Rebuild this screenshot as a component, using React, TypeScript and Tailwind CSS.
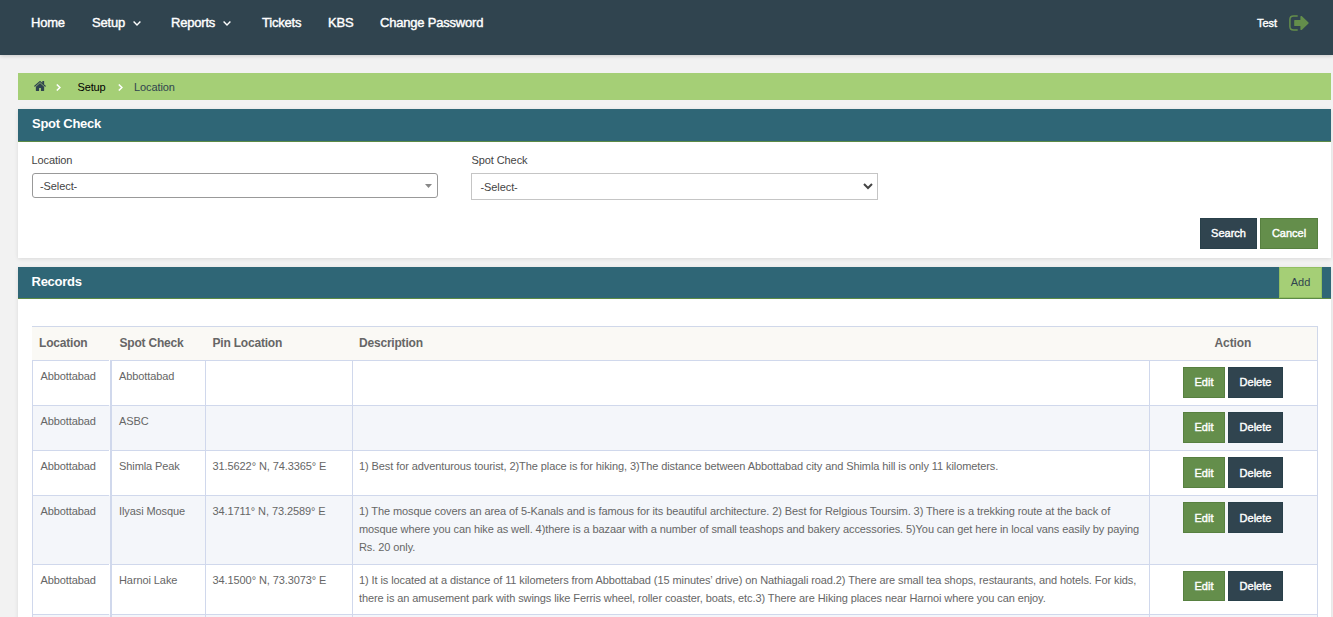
import React from "react";

const rows = [
  { h: "h-[45px]", spot: "Abbottabad", pin: "", desc: [] as string[], btn: "h-[31px] pb-[2px]" },
  { h: "h-[45px]", spot: "ASBC", pin: "", desc: [], btn: "h-[31px] pb-[2px]" },
  {
    h: "h-[45px]",
    spot: "Shimla Peak",
    pin: "31.5622° N, 74.3365° E",
    desc: ["1) Best for adventurous tourist, 2)The place is for hiking, 3)The distance between Abbottabad city and Shimla hill is only 11 kilometers."],
    btn: "h-[31px] pt-px",
  },
  {
    h: "h-[69px]",
    spot: "Ilyasi Mosque",
    pin: "34.1711° N, 73.2589° E",
    desc: [
      "1) The mosque covers an area of 5-Kanals and is famous for its beautiful architecture. 2) Best for Relgious Toursim. 3) There is a trekking route at the back of",
      "mosque where you can hike as well. 4)there is a bazaar with a number of small teashops and bakery accessories. 5)You can get here in local vans easily by paying",
      "Rs. 20 only.",
    ],
    btn: "h-[31px] pt-px",
  },
  {
    h: "h-[50px]",
    spot: "Harnoi Lake",
    pin: "34.1500° N, 73.3073° E",
    desc: [
      "1) It is located at a distance of 11 kilometers from Abbottabad (15 minutes’ drive) on Nathiagali road.2) There are small tea shops, restaurants, and hotels. For kids,",
      "there is an amusement park with swings like Ferris wheel, roller coaster, boats, etc.3) There are Hiking places near Harnoi where you can enjoy.",
    ],
    btn: "h-[30px]",
  },
];

const Chevron = ({ className }: { className: string }) => (
  <svg className={className} viewBox="0 0 8 5" fill="none" stroke="currentColor" strokeWidth="1.4">
    <path d="M0.6 0.6 4 4 7.4 0.6" />
  </svg>
);

const Separator = ({ className }: { className: string }) => (
  <svg className={`h-[7px] w-[5px] text-white ${className}`} viewBox="0 0 5 7" fill="none" stroke="currentColor" strokeWidth="1.5">
    <path d="M0.8 0.5 3.9 3.5 0.8 6.5" />
  </svg>
);

const green = "border border-[#578040] bg-[#648e4b] text-white";
const dark = "border border-[#29404a] bg-[#30444f] text-white";
const strong = "[-webkit-text-stroke:0.4px_currentColor]";

export default function App() {
  return (
    <div className="h-[617px] w-[1333px] overflow-hidden bg-[#f2f2f2] font-['Liberation_Sans',Arial,sans-serif] text-[11px] text-[#444]">
      <header className={`flex h-[55px] bg-[#30444f] text-[13px] leading-[15px] text-white shadow-[0_1px_4px_rgba(0,0,0,0.18)] ${strong}`}>
        <nav className="flex pt-[15px] pl-[31px] tracking-[-0.2px]">
          <a className="w-[61px]">Home</a>
          <a className="flex w-[79px]">Setup<Chevron className="mt-[5.5px] ml-[8px] h-[5px] w-[8px]" /></a>
          <a className="flex w-[91px]">Reports<Chevron className="mt-[5.5px] ml-[8px] h-[5px] w-[8px]" /></a>
          <a className="w-[66px]">Tickets</a>
          <a className="w-[52px]">KBS</a>
          <a>Change Password</a>
        </nav>
        <div className="ml-auto flex pt-[15px] pr-[24px] text-[11px]">
          <span className="w-[32px] pt-px">Test</span>
          <svg className="h-[16px] w-[20px] text-[#648e4b]" viewBox="0 0 20 16">
            <path d="M8.7 .9H4.5C2.2.9.9 2.2.9 4.4v7.2c0 2.2 1.3 3.5 3.6 3.5h4.2" fill="none" stroke="currentColor" strokeWidth="1.5" />
            <path d="M5.2 5.6Q5.2 5 5.8 5H11.4V1.6Q11.6.5 12.7 1.1L19.5 7.5Q19.9 8 19.5 8.5L12.7 14.9Q11.6 15.5 11.4 14.4V11H5.8Q5.2 11 5.2 10.4Z" fill="currentColor" />
          </svg>
        </div>
      </header>

      <main className="ml-[18px] w-[1313px] pt-[18px]">
        <div className="flex h-[27px] items-center bg-[#a5cf76] pl-[16px]">
          <svg className="mb-px h-[10px] w-[12px] text-[#30444f]" viewBox="0 256 1664 1280" fill="currentColor" preserveAspectRatio="none">
            <path d="M1408 992v480q0 26-19 45t-45 19h-384v-384h-256v384h-384q-26 0-45-19t-19-45v-480q0-1 .5-3t.5-3l575-474 575 474q1 2 1 6zm223-69l-62 74q-8 9-21 11h-3q-13 0-21-7l-692-577-692 577q-12 8-24 7-13-2-21-11l-62-74q-8-10-7-23.5t11-21.5l719-599q32-26 76-26t76 26l244 204v-195q0-14 9-23t23-9h192q14 0 23 9t9 23v408l219 182q10 8 11 21.5t-7 23.5z" />
          </svg>
          <Separator className="mt-px ml-[10px]" />
          <span className="ml-[16.5px] w-[40px] pt-px leading-[13px] tracking-[-0.15px] text-black">Setup</span>
          <Separator className="mt-px" />
          <span className="ml-[11.5px] pt-px leading-[13px] tracking-[-0.09px] text-[#30444f]">Location</span>
        </div>

        <section className="mt-[9px] h-[149px] bg-white shadow-[0_1px_4px_rgba(0,0,0,0.1)]">
          <h2 className="h-[33px] border-b border-[#5c8a45] bg-[#2f6676] pt-[7px] pl-[14px] text-[13px] leading-[15px] font-bold tracking-[-0.25px] text-white">Spot Check</h2>
          <div className="flex gap-[33px] pl-[14px] pt-[12px]">
            <div className="w-[406px]">
              <label className="-ml-[0.5px] block h-[19px] leading-[13px] tracking-[-0.09px]">Location</label>
              <div className="flex h-[25px] items-center justify-between rounded-[3px] border border-[#999] pr-[5px] pl-[7px]">
                <span className="pt-[2px] leading-[13px] tracking-[-0.09px]">-Select-</span>
                <svg className="h-[4px] w-[7px]" viewBox="0 0 7 4"><path d="M0 0H7L3.5 4Z" fill="#888" /></svg>
              </div>
            </div>
            <div className="w-[407px]">
              <label className="block h-[19px] pl-[0.5px] leading-[13px] tracking-[-0.09px]">Spot Check</label>
              <div className="flex h-[27px] items-center justify-between border border-[#c5c5c5] pr-[4px] pl-[8.5px]">
                <span className="pt-px leading-[13px] tracking-[-0.09px]">-Select-</span>
                <svg className="h-[7px] w-[10px]" viewBox="0 0 10 7" fill="none" stroke="#444" strokeWidth="2"><path d="M1 1 5 5 9 1" /></svg>
              </div>
            </div>
          </div>
          <div className={`mt-[18px] flex justify-end gap-[3px] pr-[13px] ${strong}`}>
            <button className={`h-[31px] w-[57px] ${dark}`}>Search</button>
            <button className={`h-[31px] w-[58px] ${green}`}>Cancel</button>
          </div>
        </section>

        <section className="mt-[9px] h-[400px] bg-white shadow-[0_1px_4px_rgba(0,0,0,0.1)]">
          <div className="flex h-[32px] justify-between border-b border-[#5c8a45] bg-[#2f6676] pr-[9px] pl-[13.5px]">
            <h2 className="pt-[7px] text-[13px] leading-[15px] font-bold tracking-[-0.25px] text-white">Records</h2>
            <button className="h-[31px] w-[43px] border border-[#92bf62] bg-[#a5cf76] text-[#30444f]">Add</button>
          </div>
          <div className="mt-[27px] ml-[14px] w-[1286px] text-[#666]">
            <div className="grid h-[34px] grid-cols-[80.5px_93px_146.5px_797px_169px] border-t border-r border-[#d0d8ea] bg-[#faf9f5] pt-[8px] pl-[7px] text-[12px] leading-[16px] font-bold tracking-[-0.2px]">
              <span>Location</span>
              <span>Spot Check</span>
              <span>Pin Location</span>
              <span>Description</span>
              <span className="pl-[58.5px] tracking-[-0.1px]">Action</span>
            </div>
            {[...rows, null].map((r, i) => (
              <div key={i} className={`grid grid-cols-[78px_95px_147px_797px_169px] leading-[18px] tracking-[-0.09px] ${r ? r.h : "h-[45px]"} ${i % 2 ? "bg-[#f4f6fa]" : "bg-white"}`}>
                <div className="mr-px border-t border-l border-[#d0d8ec] pt-[6px] pl-[7.5px]">{r ? "Abbottabad" : ""}</div>
                <div className="border-t border-l-2 border-[#d0d8ec] pt-[6px] pl-[7px]">{r?.spot}</div>
                <div className="border-t border-l border-[#d0d8ec] pt-[6px] pl-[6.5px] whitespace-nowrap">{r?.pin}</div>
                <div className="border-t border-l border-[#d0d8ec] pt-[6px] pl-[6px] whitespace-nowrap">
                  {r?.desc.map((line) => <div key={line}>{line}</div>)}
                </div>
                <div className={`flex items-start gap-[3px] border-x border-t border-[#d0d8ec] pl-[33px] pt-[6px] tracking-normal ${strong}`}>
                  {r && <button className={`w-[42px] ${r.btn} ${green}`}>Edit</button>}
                  {r && <button className={`w-[55px] ${r.btn} ${dark}`}>Delete</button>}
                </div>
              </div>
            ))}
          </div>
        </section>
      </main>
    </div>
  );
}
